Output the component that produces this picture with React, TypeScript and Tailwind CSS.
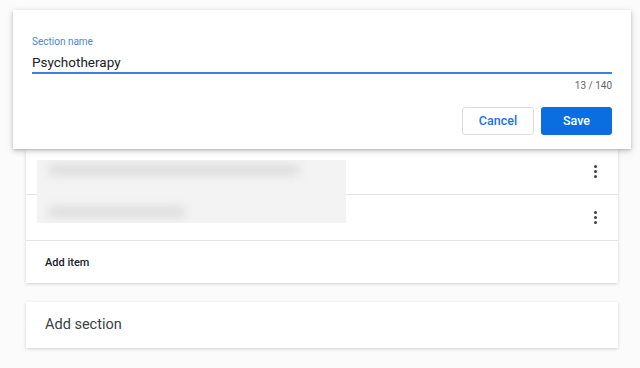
import React from 'react';

function Kebab() {
  return (
    <div className="flex flex-col items-center gap-[2px]">
      <span className="w-[3px] h-[3px] rounded-full bg-[#3c4043]" />
      <span className="w-[3px] h-[3px] rounded-full bg-[#3c4043]" />
      <span className="w-[3px] h-[3px] rounded-full bg-[#3c4043]" />
    </div>
  );
}

export default function App() {
  return (
    <div
      className="relative w-[640px] h-[368px] bg-[#fbfbfb] overflow-hidden"
      style={{ fontFamily: 'Roboto, "Liberation Sans", Arial, sans-serif' }}
    >
      <div className="pt-[149px] px-[26px] w-[644px]">
        <div className="w-[592px] bg-white shadow-[0_1px_3px_rgba(60,64,67,0.22)]">
          <div className="relative">
            <div className="h-[46px] flex items-center justify-end pr-[21px] border-b border-[#e4e4e4]">
              <Kebab />
            </div>
            <div className="h-[46px] flex items-center justify-end pr-[21px] border-b border-[#e4e4e4]">
              <Kebab />
            </div>
            <div className="absolute left-[11px] top-[11px] w-[309px] h-[63px] bg-[#f3f3f3] overflow-hidden">
              <div className="ml-[12px] mt-[5px] w-[250px] h-[10px] bg-[#dcdcdc] blur-[5px]" />
              <div className="ml-[12px] mt-[32px] w-[136px] h-[10px] bg-[#dcdcdc] blur-[5px]" />
            </div>
          </div>
          <div className="h-[42px] flex items-center px-[19px] pt-[3px] text-[11px] font-medium text-[#202124]">
            Add item
          </div>
        </div>
        <div className="mt-[19px] w-[592px] h-[46px] bg-white shadow-[0_1px_3px_rgba(60,64,67,0.22)] flex items-center px-[19px] text-[14.5px] text-[#3c4043]">
          Add section
        </div>
      </div>

      <div className="absolute left-[13px] top-[10px] w-[618px] h-[139px] bg-white shadow-[0_2px_6px_rgba(0,0,0,0.22),0_1px_2px_rgba(0,0,0,0.12)] px-[19px] pt-[26px]">
        <div className="text-[10px] leading-[12px] text-[#4a86dc]">Section name</div>
        <div className="mt-[6px] text-[13.5px] leading-[17px] text-[#202124]">Psychotherapy</div>
        <div className="mt-[1px] h-[2px] bg-[#3c7fe0]" />
        <div className="mt-[6px] text-right text-[10px] leading-[12px] text-[#5f6368]">13 / 140</div>
        <div className="mt-[15px] flex justify-end gap-[7px]">
          <button className="w-[72px] h-[28px] rounded-[3px] border border-[#dadce0] bg-white text-[12.5px] font-medium text-[#1a73e8]">
            Cancel
          </button>
          <button className="w-[71px] h-[28px] rounded-[3px] bg-[#0b6ee0] text-[12.5px] font-medium text-white">
            Save
          </button>
        </div>
      </div>
    </div>
  );
}
